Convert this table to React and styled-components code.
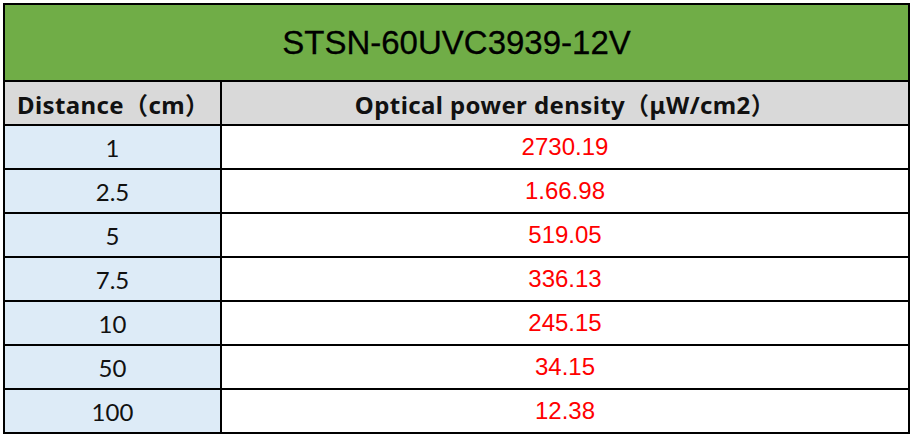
import React from "react";
import styled, { createGlobalStyle } from "styled-components";

const GlobalStyle = createGlobalStyle`
  html, body {
    margin: 0;
    padding: 0;
    background: #ffffff;
  }
`;

const Page = styled.div`
  padding: 3px 0 0 3px;
`;

const Table = styled.table`
  width: 907px;
  border-collapse: collapse;
  table-layout: fixed;
  border: 2px solid #000;
`;

const TitleCell = styled.th`
  height: 75px;
  padding: 0;
  background-color: #70ad47;
  border: 2px solid #000;
  font-family: "Liberation Sans", Arial, sans-serif;
  font-size: 33px;
  font-weight: normal;
  color: #000;
  text-align: center;
  vertical-align: middle;
  -webkit-text-stroke: 0.3px #000;
`;

const HeadCell = styled.th`
  height: 42px;
  padding: 0;
  background-color: #d9d9d9;
  border: 2px solid #000;
  font-family: "Noto Sans", "Noto Sans CJK SC", sans-serif;
  font-size: 24px;
  font-weight: 700;
  letter-spacing: 0.4px;
  color: #111;
  text-align: ${props => (props.$left ? "left" : "center")};
  padding-left: ${props => (props.$left ? "12px" : "0")};
  white-space: nowrap;
`;

const DistanceCell = styled.td`
  height: 42px;
  padding: 0;
  background-color: #ddebf7;
  border: 2px solid #000;
  font-family: Lato, "Liberation Sans", sans-serif;
  font-size: 24px;
  color: #111;
  text-align: center;
  vertical-align: middle;
`;

const ValueCell = styled.td`
  height: 42px;
  padding: 0;
  background-color: #ffffff;
  border: 2px solid #000;
  font-family: "Liberation Sans", Arial, sans-serif;
  font-size: 24px;
  color: #ff0000;
  text-align: center;
  vertical-align: middle;
`;

const rows = [
  ["1", "2730.19"],
  ["2.5", "1.66.98"],
  ["5", "519.05"],
  ["7.5", "336.13"],
  ["10", "245.15"],
  ["50", "34.15"],
  ["100", "12.38"],
];

const App = () => (
  <Page>
    <GlobalStyle />
    <Table>
      <colgroup>
        <col style={{ width: "217px" }} />
        <col />
      </colgroup>
      <thead>
        <tr>
          <TitleCell colSpan={2}>STSN-60UVC3939-12V</TitleCell>
        </tr>
        <tr>
          <HeadCell $left>Distance（cm）</HeadCell>
          <HeadCell>Optical power density（μW/cm2）</HeadCell>
        </tr>
      </thead>
      <tbody>
        {rows.map(([distance, value]) => (
          <tr key={distance}>
            <DistanceCell>{distance}</DistanceCell>
            <ValueCell>{value}</ValueCell>
          </tr>
        ))}
      </tbody>
    </Table>
  </Page>
);

export default App;
